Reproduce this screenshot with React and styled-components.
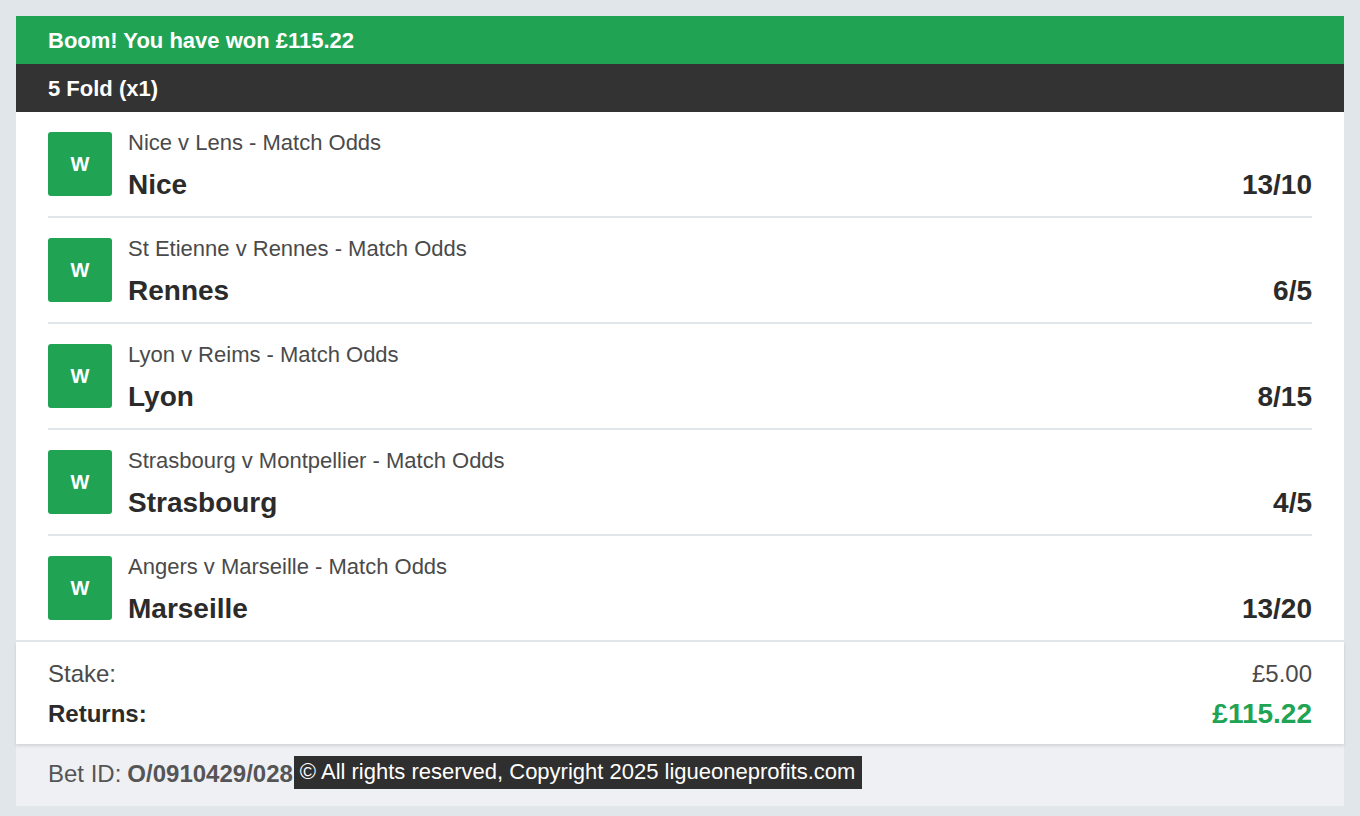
import React from "react";
import styled, { createGlobalStyle } from "styled-components";

const GlobalStyle = createGlobalStyle`
  body {
    margin: 0;
    padding: 16px 16px 10px;
    background: #e1e6ea;
    font-family: "Liberation Sans", Arial, sans-serif;
  }
`;

const Card = styled.div`
  background: #ffffff;
  display: flex;
  flex-direction: column;
`;

const Banner = styled.div`
  height: 48px;
  box-sizing: border-box;
  padding: 2px 32px 0;
  display: flex;
  align-items: center;
  background: ${(p) => (p.$dark ? "#333333" : "#21a354")};
  color: #ffffff;
  font-size: 22px;
  font-weight: bold;
`;

const Legs = styled.div`
  padding: 0 32px;
  border-bottom: 2px solid #e1e6ea;
`;

const Leg = styled.div`
  display: flex;
  align-items: center;
  gap: 16px;
  padding: 20px 0;
  border-bottom: 2px solid #e1e6ea;

  &:last-child {
    border-bottom: none;
  }
`;

const Badge = styled.div`
  width: 64px;
  height: 64px;
  flex: none;
  border-radius: 3px;
  background: #21a354;
  color: #ffffff;
  font-size: 20px;
  font-weight: bold;
  display: flex;
  align-items: center;
  justify-content: center;
`;

const LegBody = styled.div`
  flex: 1;
  display: flex;
  flex-direction: column;
  gap: 12px;
  margin: -2px 0 -6px;
`;

const Market = styled.div`
  font-size: 22px;
  color: #4a4a4a;
  line-height: 26px;
`;

const Selection = styled.div`
  display: flex;
  justify-content: space-between;
  font-size: 28px;
  font-weight: bold;
  color: #2b2b2b;
  line-height: 34px;
`;

const Summary = styled.div`
  padding: 17px 32px 15px;
  display: flex;
  flex-direction: column;
  gap: 10px;
  box-shadow: 0 2px 3px rgba(0, 0, 0, 0.12);
  position: relative;
`;

const SumRow = styled.div`
  display: flex;
  justify-content: space-between;
  align-items: center;
  font-size: 24px;
  font-weight: ${(p) => (p.$bold ? "bold" : "normal")};
  color: ${(p) => (p.$bold ? "#2b2b2b" : "#4a4a4a")};
  line-height: 30px;
`;

const Amount = styled.span`
  color: ${(p) => (p.$win ? "#21a354" : "#4a4a4a")};
  font-size: ${(p) => (p.$win ? "28px" : "24px")};
`;

const Footer = styled.div`
  background: #eff0f4;
  height: 62px;
  box-sizing: border-box;
  padding: 0 32px 2px;
  display: flex;
  align-items: center;
  font-size: 24px;
  color: #555555;
`;

const BetId = styled.b`
  color: #555555;
  margin-left: 6px;
`;

const Copyright = styled.span`
  background: #2f2f2f;
  color: #ffffff;
  font-size: 22px;
  padding: 4px 7px 5px 6px;
  line-height: 24px;
  margin: 0 0 3px 1px;
`;

const legs = [
  { market: "Nice v Lens - Match Odds", pick: "Nice", odds: "13/10" },
  { market: "St Etienne v Rennes - Match Odds", pick: "Rennes", odds: "6/5" },
  { market: "Lyon v Reims - Match Odds", pick: "Lyon", odds: "8/15" },
  { market: "Strasbourg v Montpellier - Match Odds", pick: "Strasbourg", odds: "4/5" },
  { market: "Angers v Marseille - Match Odds", pick: "Marseille", odds: "13/20" },
];

export default function App() {
  return (
    <>
      <GlobalStyle />
      <Card>
        <Banner>Boom! You have won £115.22</Banner>
        <Banner $dark>5 Fold (x1)</Banner>
        <Legs>
          {legs.map((l) => (
            <Leg key={l.pick}>
              <Badge>W</Badge>
              <LegBody>
                <Market>{l.market}</Market>
                <Selection>
                  <span>{l.pick}</span>
                  <span>{l.odds}</span>
                </Selection>
              </LegBody>
            </Leg>
          ))}
        </Legs>
        <Summary>
          <SumRow>
            <span>Stake:</span>
            <Amount>£5.00</Amount>
          </SumRow>
          <SumRow $bold>
            <span>Returns:</span>
            <Amount $win>£115.22</Amount>
          </SumRow>
        </Summary>
        <Footer>
          Bet ID:<BetId>O/0910429/028</BetId>
          <Copyright>© All rights reserved, Copyright 2025 ligueoneprofits.com</Copyright>
        </Footer>
      </Card>
    </>
  );
}
